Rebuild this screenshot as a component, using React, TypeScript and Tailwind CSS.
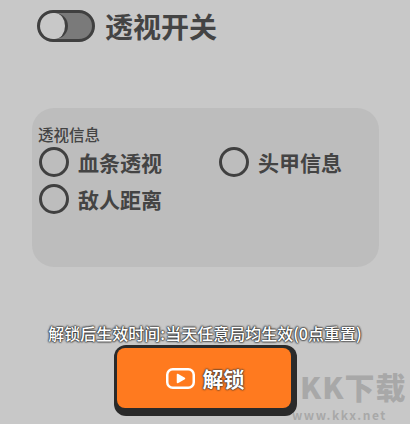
import React from 'react';

const cjk = "font-['Noto_Sans_CJK_SC','Noto_Sans',sans-serif]";

const Radio = ({ label }: { label: string }) => (
  <div className="flex items-center gap-[9px] h-[30px]">
    <span className="w-[30px] h-[30px] rounded-full border-[3px] border-[#404040] shrink-0" />
    <span className="text-[21px] leading-none font-bold text-[#444444]">{label}</span>
  </div>
);

export default function App() {
  return (
    <div className={`relative w-[410px] h-[424px] overflow-hidden bg-[#c8c8c8] flex flex-col ${cjk}`}>
      {/* top switch */}
      <div className="flex items-center gap-[10px] pl-[37px] pt-[10px]">
        <div className="w-[58px] h-[32px] rounded-full border-[3.5px] border-[#404040] bg-[#7a7a7a] overflow-hidden">
          <div className="w-[25px] h-full rounded-full bg-[#c8c8c8] border-r-[3.5px] border-[#404040] box-content" />
        </div>
        <span className="text-[28px] leading-none font-bold text-[#444444]">透视开关</span>
      </div>

      {/* info panel */}
      <div className="mt-[66px] ml-[32px] w-[347px] h-[159px] rounded-[22px] bg-[#bdbdbd] pt-[16px] pl-[6px]">
        <div className="text-[15.5px] leading-[20px] font-medium text-[#444444]">透视信息</div>
        <div className="grid grid-cols-[180px_1fr] gap-y-[7px] pl-[1px] mt-[3px]">
          <Radio label="血条透视" />
          <Radio label="头甲信息" />
          <Radio label="敌人距离" />
        </div>
      </div>

      {/* unlock */}
      <div className="mt-[56px] text-center text-[16px] leading-[20px] font-medium text-white [text-shadow:0_0_1px_#333,0_0_2px_#333,0_0_2px_#333,0_0_2px_#333]">
        解锁后生效时间:当天任意局均生效(0点重置)
      </div>
      <div className="mt-[2px] ml-[114px] w-[183px] h-[71px] rounded-[12px] bg-[#2a2a2a] pt-[3px] pl-[3px] pr-[6px] pb-[8px]">
        <div className="w-full h-full rounded-[8px] bg-[#ff7a1f] flex items-center justify-center gap-[8px] pl-[2px] pt-[1px]">
          <svg width="29" height="21" viewBox="0 0 29 21" fill="none">
            <rect x="1.25" y="1.25" width="26.5" height="18.5" rx="5.5" stroke="#ffffff" strokeWidth="2.5" />
            <path d="M11.5 6.5 L18.5 10.5 L11.5 14.5 Z" fill="#ffffff" stroke="#ffffff" strokeWidth="1.5" strokeLinejoin="round" />
          </svg>
          <span className="text-[21px] leading-none font-bold text-white [text-shadow:0_0_2px_#333,0_0_2px_#333,0_0_1px_#333]">解锁</span>
        </div>
      </div>

      {/* watermark */}
      <div className="absolute left-[300px] top-[371px] text-[30px] leading-none font-black text-[#a8a8a8] tracking-[1px] whitespace-nowrap">KK下载</div>
      <div className="absolute left-[292px] top-[408px] text-[12px] leading-[14px] font-bold text-[#a8a8a8] tracking-[1.5px] whitespace-nowrap">www.kkx.net</div>
    </div>
  );
}
